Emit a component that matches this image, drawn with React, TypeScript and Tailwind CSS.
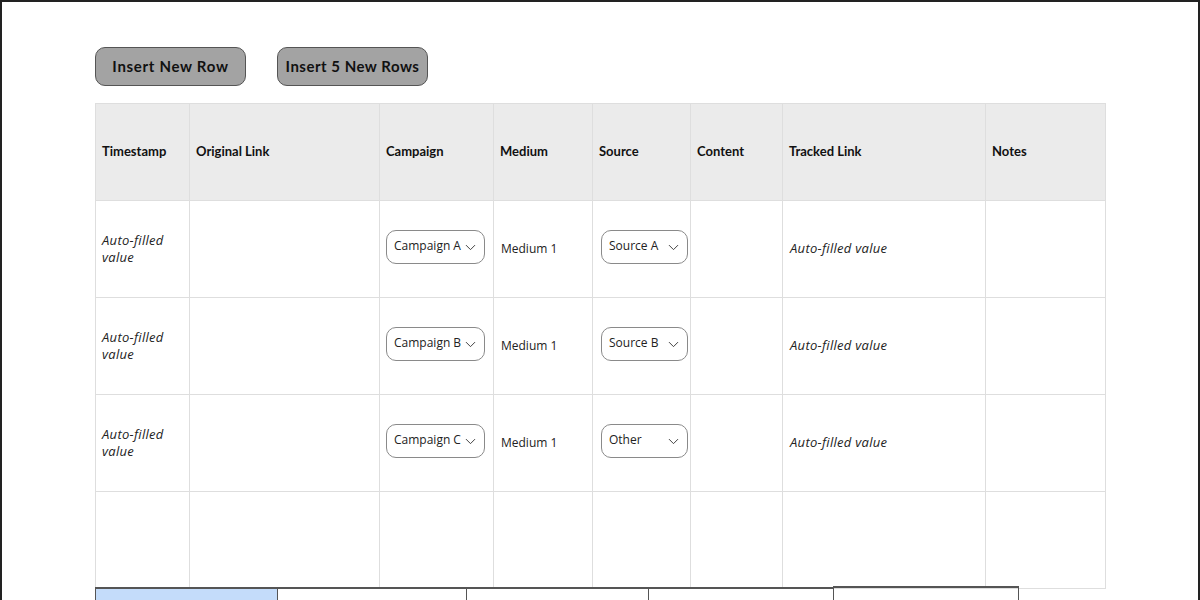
import { ChevronDown } from "lucide-react";

type Row = { campaign: string; source: string } | null;

const rows: Row[] = [
  { campaign: "Campaign A", source: "Source A" },
  { campaign: "Campaign B", source: "Source B" },
  { campaign: "Campaign C", source: "Other" },
  null,
];

const headers = ["Timestamp", "Original Link", "Campaign", "Medium", "Source", "Content", "Tracked Link", "Notes"];
const cols = "grid grid-cols-[94px_190px_114px_99px_98px_92px_203px_120px]";
const cell = "h-[97px] border-r border-b border-[#dedede] flex items-center";

function Select({ label, wide }: { label: string; wide?: boolean }) {
  return (
    <div className={`mb-[4px] flex h-[34px] items-center justify-between whitespace-nowrap rounded-[10px] border border-[#8a8a8a] bg-white pl-[7px] pr-[5px] text-[12px] text-[#222] ${wide ? "w-[99px]" : "w-[87px]"}`}>
      <span className="mb-[2px]">{label}</span>
      <ChevronDown className="h-[17px] w-[17px] shrink-0 text-[#333]" strokeWidth={1.3} />
    </div>
  );
}

export default function App() {
  return (
    <div className="h-[600px] w-[1200px] overflow-hidden border-t-2 border-l-2 border-r-2 border-[#222] bg-white font-['Lato',sans-serif] text-[#111]">
      <div className="flex gap-[31px] pl-[93px] pt-[45px]">
        <button className="h-[39px] w-[151px] rounded-[10px] border border-[#555] bg-[#a3a3a3] text-[15px] font-bold tracking-[0.7px] text-[#111]">Insert New Row</button>
        <button className="h-[39px] w-[151px] rounded-[10px] border border-[#555] bg-[#a3a3a3] text-[15px] font-bold tracking-[0.5px] text-[#111]">Insert 5 New Rows</button>
      </div>

      <div className="ml-[93px] mt-[17px] w-[1011px] border-l border-t border-[#dedede]">
        <div className={cols}>
          {headers.map((h) => (
            <div key={h} className={`${cell} bg-[#ebebeb] pl-[6px] text-[13px] font-bold`}>{h}</div>
          ))}
        </div>
        {rows.map((r, i) => (
          <div key={i} className={`${cols} font-['Open_Sans',sans-serif] text-[12px] text-[#222]`}>
            <div className={`${cell} pl-[6px] text-[13px] italic leading-[17px] tracking-[0.3px]`}>{r && <span>Auto-filled<br />value</span>}</div>
            <div className={cell} />
            <div className={`${cell} pl-[6px]`}>{r && <Select label={r.campaign} wide />}</div>
            <div className={`${cell} pl-[7px]`}>{r && "Medium 1"}</div>
            <div className={`${cell} pl-[8px]`}>{r && <Select label={r.source} />}</div>
            <div className={cell} />
            <div className={`${cell} pl-[7px] text-[13px] italic tracking-[0.3px]`}>{r && "Auto-filled value"}</div>
            <div className={cell} />
          </div>
        ))}
      </div>

      <div className="-mt-[2px] ml-[93px] flex">
        <div className="h-[14px] w-[182px] border-t-2 border-l border-[#555] bg-[#c4dcfa]" />
        <div className="h-[14px] w-[189px] border-t-2 border-l border-[#555]" />
        <div className="h-[14px] w-[182px] border-t-2 border-l border-[#555]" />
        <div className="h-[14px] w-[185px] border-t-2 border-l border-[#555]" />
        <div className="-mt-px h-[15px] w-[186px] border-t-2 border-l border-r border-[#555]" />
      </div>
    </div>
  );
}
